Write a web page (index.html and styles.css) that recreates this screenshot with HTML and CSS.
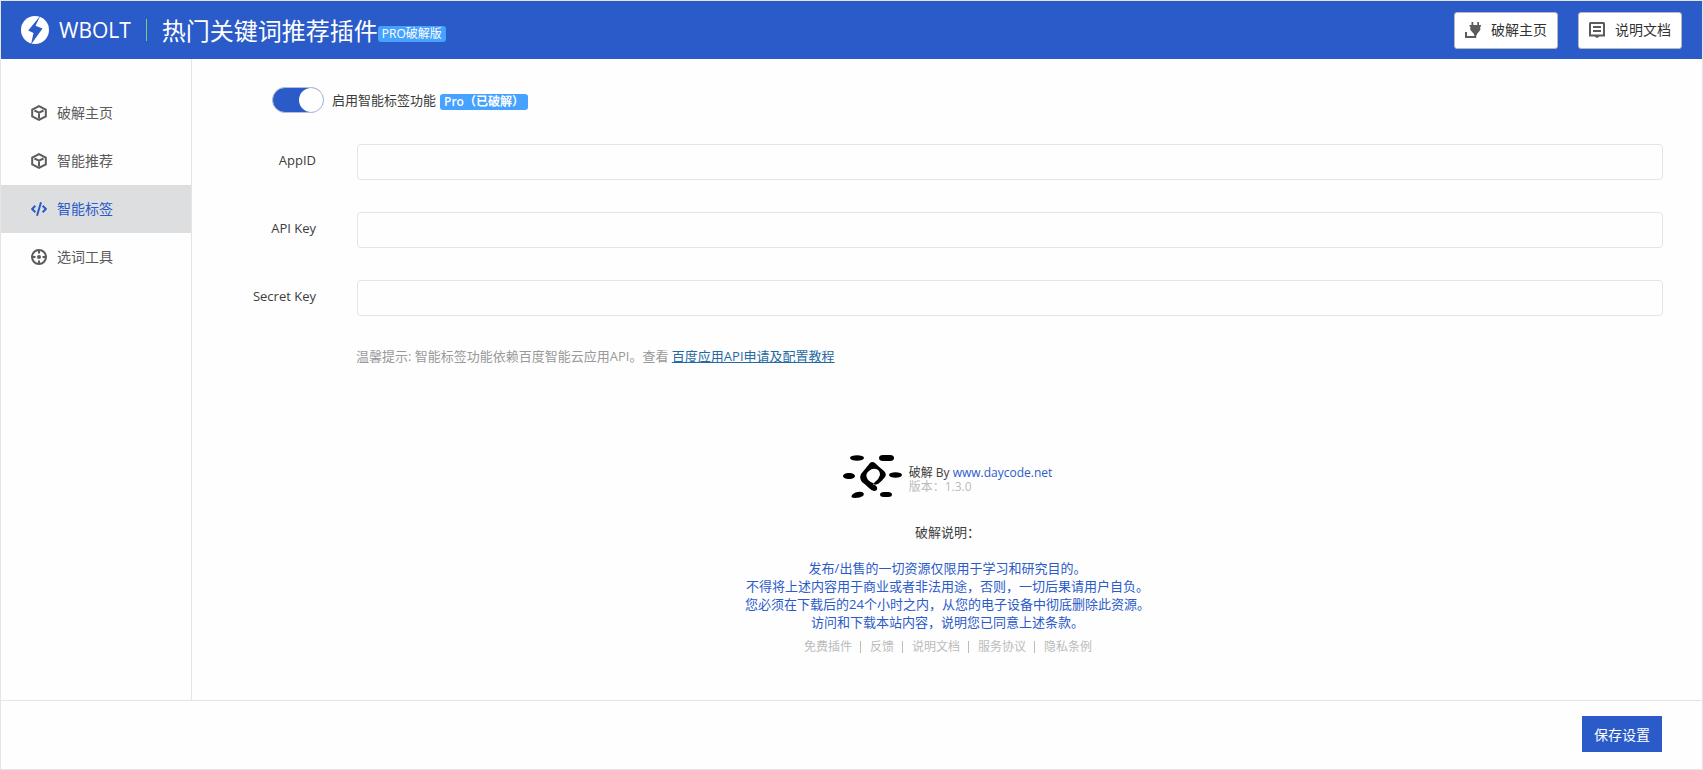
FILE: index.html
```html
<!DOCTYPE html>
<html lang="zh-CN">
<head>
    <meta charset="UTF-8">
    <meta name="viewport" content="width=device-width, initial-scale=1.0">
    <title>热门关键词推荐插件</title>
    <link rel="stylesheet" href="styles.css">
</head>
<body>
    <div class="page">
        <header class="header">
            <svg class="logo" viewBox="0 0 28 28" aria-hidden="true">
                <circle cx="14" cy="14" r="14" fill="#fff"/>
                <path d="M19.500-.5 7.200 14.500l5.300 2.500L10 28.500 21.500 12.500l-7-2.700z" fill="#2a5bc9"/>
            </svg>
            <span class="brand">WBOLT</span>
            <h1 class="title">热门关键词推荐插件</h1>
            <span class="badge badge-title">PRO破解版</span>
            <div class="header-links">
                <a class="header-btn" href="#">
                    <svg class="icon" viewBox="0 0 16 16" aria-hidden="true">
                        <path d="M6.500 0h1.800v3h4V0H14v3h2v1.500h-.7V8L12 12v1H9v-1L5.300 8V4.500H4.500V3h2z"/>
                        <path d="M0 10h2v4h7.300v-2h2v4H0z"/>
                    </svg>
                    破解主页
                </a>
                <a class="header-btn" href="#">
                    <svg class="icon" viewBox="0 0 16 16" aria-hidden="true">
                        <path fill-rule="evenodd" d="M1.500 0h13A1.500 1.500 0 0 1 16 1.500V14.500h-5.500L8 16l-2.500-1.500H0V1.500A1.500 1.500 0 0 1 1.500 0zM2 2v10.500h12V2zM4 4h8v2H4zM4 8h8v2H4z"/>
                    </svg>
                    说明文档
                </a>
            </div>
        </header>

        <div class="main">
            <nav class="sidebar">
                <a class="nav-item" href="#">
                    <svg class="icon icon-line" viewBox="0 0 16 16" aria-hidden="true">
                        <path d="M8 1.200l6.800 3.400v6.800L8 14.800l-6.800-3.400V4.600zM3.500 5.500 8 7.700l4.500-2.200M8 7.700v5.500"/>
                    </svg>
                    破解主页
                </a>
                <a class="nav-item" href="#">
                    <svg class="icon icon-line" viewBox="0 0 16 16" aria-hidden="true">
                        <path d="M8 1.200l6.800 3.400v6.800L8 14.800l-6.800-3.400V4.600zM3.500 5.500 8 7.700l4.500-2.200M8 7.700v5.500"/>
                    </svg>
                    智能推荐
                </a>
                <a class="nav-item active" href="#">
                    <svg class="icon icon-line" viewBox="0 0 16 16" aria-hidden="true">
                        <path d="M4.300 4.800 1.200 8l3.100 3.200M11.700 4.800 14.800 8l-3.100 3.200M10 1.200 6 14.800"/>
                    </svg>
                    智能标签
                </a>
                <a class="nav-item" href="#">
                    <svg class="icon icon-line" viewBox="0 0 16 16" aria-hidden="true">
                        <circle cx="8" cy="8" r="7"/>
                        <path d="M8 1v3.500M8 11.500V15M1 8h3.500M11.500 8H15"/>
                        <circle class="dot" cx="8" cy="8" r="2"/>
                    </svg>
                    选词工具
                </a>
            </nav>

            <div class="content">
                <div class="switch-row">
                    <input type="checkbox" class="switch" id="enableTag" checked>
                    <label for="enableTag">启用智能标签功能</label>
                    <span class="badge badge-pro">Pro（已破解）</span>
                </div>

                <div class="form-group">
                    <label for="appId">AppID</label>
                    <input type="text" id="appId">
                </div>
                <div class="form-group">
                    <label for="apiKey">API Key</label>
                    <input type="text" id="apiKey">
                </div>
                <div class="form-group">
                    <label for="secretKey">Secret Key</label>
                    <input type="text" id="secretKey">
                </div>
                <p class="tip">温馨提示: 智能标签功能依赖百度智能云应用API。查看 <a href="#">百度应用API申请及配置教程</a></p>

                <div class="about">
                    <div class="about-head">
                        <svg class="about-logo" viewBox="0 0 60 44" aria-hidden="true">
                            <ellipse cx="14" cy="3" rx="7" ry="2.700"/>
                            <rect x="36" y="0" width="15" height="6" rx="4" ry="3"/>
                            <rect x="0" y="18" width="12" height="6" rx="5" ry="3"/>
                            <ellipse cx="52.500" cy="20" rx="6.500" ry="2.700"/>
                            <path d="M9 40q4-4 10-3 3 1 1 4-3 2-8 2-5 0-3-3z"/>
                            <rect x="37" y="37" width="12" height="5" rx="4" ry="2.500"/>
                            <path fill-rule="evenodd" d="M27 8q2-2 5 0 4 4 9 8 3 3 1 6-3 4-7 7l-4 1-1-1 2-2q4-3 5-7 0-5-4-6-4-1-7 2-4 3-2 7 1 3 6 5l4 4q1 4-3 4-2 0-5-3-3-3-7-6-3-4-1-8 5-6 9-11z"/>
                        </svg>
                        <div class="about-info">
                            <div>破解 By <a href="#">www.daycode.net</a></div>
                            <div class="version">版本：1.3.0</div>
                        </div>
                    </div>
                    <p class="about-title">破解说明：</p>
                    <p class="notice">
                        发布/出售的一切资源仅限用于学习和研究目的。<br>
                        不得将上述内容用于商业或者非法用途，否则，一切后果请用户自负。<br>
                        您必须在下载后的24个小时之内，从您的电子设备中彻底删除此资源。<br>
                        访问和下载本站内容，说明您已同意上述条款。
                    </p>
                    <div class="links">
                        <a href="#">免费插件</a>
                        <a href="#">反馈</a>
                        <a href="#">说明文档</a>
                        <a href="#">服务协议</a>
                        <a href="#">隐私条例</a>
                    </div>
                </div>
            </div>
        </div>

        <footer class="footer">
            <button type="button" class="btn">保存设置</button>
        </footer>
    </div>
</body>
</html>
```

FILE: styles.css
```css
* {
    box-sizing: border-box;
}
body {
    margin: 0;
    font-family: 'Open Sans', 'Noto Sans CJK SC', sans-serif;
    font-size: 13px;
    line-height: 18px;
    color: #3c3c3c;
    background-color: #fefefe;
}
a {
    color: #2a5bc9;
    text-decoration: none;
}
h1, p {
    margin: 0;
}
.page {
    display: flex;
    flex-direction: column;
    min-height: 100vh;
    border: 1px solid #e5e5e5;
}

/* header */
.header {
    display: flex;
    align-items: center;
    height: 58px;
    padding: 0 20px;
    color: #fff;
    background-color: #2a5bc9;
}
.logo {
    width: 28px;
    height: 28px;
    margin-right: 10px;
}
.brand {
    padding-right: 15px;
    font-size: 21px;
    line-height: 22px;
    border-right: 1px solid #6fd07a;
}
.title {
    margin-left: 15px;
    padding-top: 2px;
    font-size: 24px;
    font-weight: 400;
    line-height: 36px;
}
.badge {
    padding: 0 4px;
    font-size: 12px;
    line-height: 16px;
    color: #fff;
    background-color: #45a2ff;
    border-radius: 3px;
}
.badge-title {
    margin-top: 8px;
}
.badge-pro {
    margin-top: 4px;
    font-weight: 600;
}
.header-links {
    display: flex;
    gap: 20px;
    margin-left: auto;
}
.header-btn {
    display: flex;
    align-items: center;
    gap: 10px;
    height: 37px;
    padding: 0 10px;
    font-size: 14px;
    color: #333;
    background-color: #fff;
    border: 1px solid #b4b9be;
    border-radius: 3px;
}
.icon {
    flex: none;
    width: 16px;
    height: 16px;
    fill: #5b5b5b;
}
.icon-line {
    fill: none;
    stroke: #5b5b5b;
    stroke-width: 2;
}
.icon-line .dot {
    fill: #5b5b5b;
    stroke: none;
}

/* sidebar */
.main {
    display: flex;
    flex: 1;
}
.sidebar {
    flex: none;
    width: 191px;
    padding-top: 30px;
    border-right: 1px solid #e5e5e5;
}
.nav-item {
    display: flex;
    align-items: center;
    gap: 10px;
    height: 48px;
    padding-left: 30px;
    font-size: 14px;
    color: #5b5b5b;
}
.nav-item.active {
    color: #2a5bc9;
    background-color: #dddee0;
}
.nav-item.active .icon {
    stroke: #2a5bc9;
}

/* settings form */
.content {
    flex: 1;
    padding: 28px 39px 44px 40px;
}
.switch-row {
    display: flex;
    align-items: center;
    height: 26px;
    margin: 0 0 31px 40px;
}
.switch-row label {
    margin: 0 4px 0 8px;
}
.switch {
    appearance: none;
    display: flex;
    justify-content: flex-end;
    width: 52px;
    height: 26px;
    margin: 0;
    background-color: #2a5bc9;
    border: 1px solid #b3bbd6;
    border-radius: 13px;
    cursor: pointer;
}
.switch::before {
    content: '';
    width: 24px;
    height: 24px;
    background-color: #fff;
    border-radius: 50%;
}
.switch:not(:checked) {
    justify-content: flex-start;
    background-color: #ccc;
}
.form-group {
    display: flex;
    margin-bottom: 32px;
}
.form-group label {
    flex: none;
    width: 84px;
    margin-right: 41px;
    line-height: 32px;
    text-align: right;
}
.form-group input {
    flex: 1;
    height: 36px;
    padding: 0 10px;
    font: inherit;
    color: inherit;
    background-color: #fefefe;
    border: 1px solid #e5e5e5;
    border-radius: 4px;
}
.tip {
    margin: -1px 0 0 124px;
    color: #999;
}
.tip a {
    color: #2569a3;
    text-decoration: underline;
}

/* about */
.about {
    margin-top: 90px;
    text-align: center;
}
.about-head {
    display: flex;
    justify-content: center;
    align-items: center;
    gap: 6px;
}
.about-logo {
    width: 60px;
    height: 44px;
}
.about-info {
    padding-top: 6px;
    font-size: 12px;
    line-height: 14px;
    text-align: left;
}
.version {
    color: #bbb;
}
.about-title {
    margin: 24px 0 18px;
}
.notice {
    color: #2a5bc9;
}
.links {
    display: flex;
    justify-content: center;
    margin-top: 10px;
    font-size: 12px;
    line-height: 12px;
}
.links a {
    padding: 0 8px 0 9px;
    color: #bbb;
}
.links a + a {
    border-left: 1px solid #bbb;
}

/* bottom bar */
.footer {
    display: flex;
    justify-content: flex-end;
    padding: 15px 40px 17px;
    border-top: 1px solid #e5e5e5;
}
.btn {
    width: 80px;
    height: 36px;
    padding: 0;
    font-family: inherit;
    font-size: 14px;
    color: #fff;
    background-color: #2a5bc9;
    border: none;
    cursor: pointer;
}
```
